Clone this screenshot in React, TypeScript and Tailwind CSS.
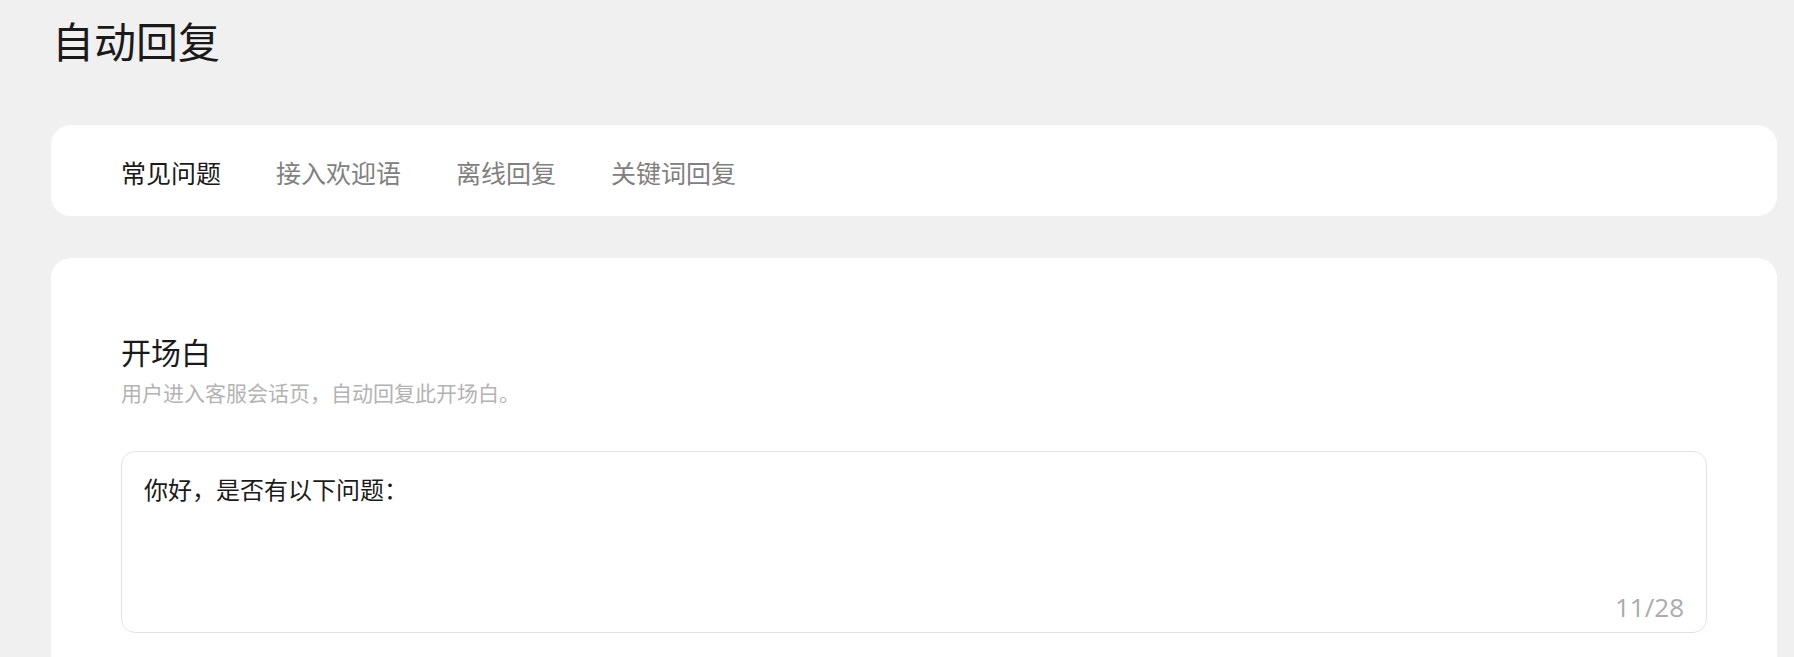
export default function App() {
  const tabs = ["常见问题", "接入欢迎语", "离线回复", "关键词回复"];
  return (
    <div
      className="min-h-[657px] bg-[#f0f0f0] pl-[51px] pr-[17px] pt-[19px]"
      style={{ fontFamily: '"Noto Sans CJK SC", "Noto Sans", sans-serif' }}
    >
      <h1 className="pl-[1px] text-[42px] leading-[42px] font-normal text-[#1a1a1a]">自动回复</h1>
      <div className="mt-[64px] flex h-[91px] items-center gap-[55px] rounded-[20px] bg-white pl-[70px] pt-[3px]">
        {tabs.map((t, i) => (
          <span
            key={t}
            className={
              i === 0
                ? "text-[25px] leading-[25px] text-[#1a1a1a]"
                : "text-[25px] leading-[25px] text-[#808080]"
            }
          >
            {t}
          </span>
        ))}
      </div>
      <div className="mt-[42px] rounded-t-[20px] bg-white px-[70px] pt-[78px] pb-[40px]">
        <h2 className="text-[30px] leading-[30px] font-normal text-[#1a1a1a]">开场白</h2>
        <p className="mt-[16px] text-[21px] leading-[21px] text-[#b3b3b3]">
          用户进入客服会话页，自动回复此开场白。
        </p>
        <div className="mt-[48px] flex h-[182px] flex-col justify-between rounded-[14px] border border-[#e3e3e3] pl-[22px] pr-[22px] pt-[25px] pb-[12px]">
          <div className="text-[24px] leading-[24px] text-[#1a1a1a]">你好，是否有以下问题：</div>
          <div
            className="self-end text-[26px] leading-[26px] text-[#ababab]"
            style={{ fontFamily: '"Open Sans", "Noto Sans", sans-serif' }}
          >
            11/28
          </div>
        </div>
      </div>
    </div>
  );
}
